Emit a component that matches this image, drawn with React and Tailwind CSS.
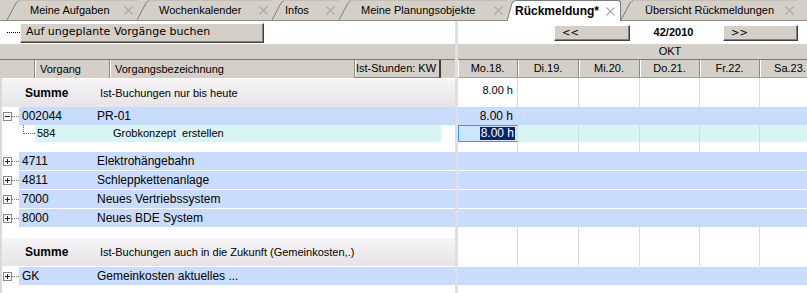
import React from 'react'

// tab strip of the planning client
const TABS = [
  { label: 'Meine Aufgaben', w: 'w-[130px]', pl: 'pl-[11px]' },
  { label: 'Wochenkalender', w: 'w-[135px]', pl: 'pl-[10px]' },
  { label: 'Infos', w: 'w-[67px]', pl: 'pl-[1px]' },
  { label: 'Meine Planungsobjekte', w: 'w-[168px]', pl: 'pl-[10px]' },
  { label: 'Rückmeldung*', w: 'w-[114px]', pl: 'pl-0', active: true },
  { label: 'Übersicht Rückmeldungen', w: 'w-[177px]', pl: 'pl-[12px]' },
]

const COL_W = ['w-[60px]', 'w-[61px]', 'w-[61px]', 'w-[60px]', 'w-[60px]', 'w-[61px]', 'w-[61px]']
const DAYS = ['Mo.18.', 'Di.19.', 'Mi.20.', 'Do.21.', 'Fr.22.', 'Sa.23.', 'So.24.']

const PROJECTS = [
  { code: '4711', name: 'Elektrohängebahn' },
  { code: '4811', name: 'Schleppkettenanlage' },
  { code: '7000', name: 'Neues Vertriebssystem' },
  { code: '8000', name: 'Neues BDE System' },
]

function CloseX() {
  return (
    <svg width="9" height="9" viewBox="0 0 9 9" className="shrink-0">
      <path d="M0.5 0.5 L8.5 8.5 M8.5 0.5 L0.5 8.5" stroke="#a9a9a9" strokeWidth="1.1" />
    </svg>
  )
}

function Tab({ tab }) {
  const slantW = tab.active ? 8 : 12
  return (
    <div className={`${tab.w} flex h-[20px] shrink-0 ${tab.active ? '-mb-px h-[21px]' : ''}`}>
      <svg width={slantW} height={tab.active ? 21 : 20} viewBox={`0 0 ${slantW} 20`} preserveAspectRatio="none" className="shrink-0">
        {tab.active && <path d={`M0 20 L${slantW - 3} 3 Q${slantW - 1.5} 1 ${slantW} 1 L${slantW} 20 Z`} fill="#fff" />}
        <path d={`M0 20 L${slantW - 3} 3 Q${slantW - 1.5} 1 ${slantW} 1`} stroke="#7c7c7c" fill="none" strokeWidth="1" />
      </svg>
      <div
        className={`flex flex-1 items-center border-t ${
          tab.active
            ? 'border-t-[#7c7c7c] border-r border-r-[#7c7c7c] rounded-tr-[3px] bg-white pr-[5px]'
            : 'border-t-[#c4c0b8] pr-[4px]'
        } ${tab.pl}`}
      >
        <span className={tab.active ? 'text-[12px] font-bold text-black' : 'text-[11px] text-black'}>{tab.label}</span>
        <span className="flex-1" />
        <CloseX />
      </div>
    </div>
  )
}

function TreeBox({ open }) {
  return (
    <div className="flex items-center">
      <svg width="9" height="9" viewBox="0 0 9 9" className="shrink-0">
        <rect x="0.5" y="0.5" width="8" height="8" fill="#fff" stroke="#8a8a8a" />
        <path d="M2 4.5 H7" stroke="#222" />
        {!open && <path d="M4.5 2 V7" stroke="#222" />}
      </svg>
      <div className="w-[7px] border-t border-dotted border-[#7a7a7a]" />
    </div>
  )
}

function ProjectRow({ code, name, open, last }) {
  return (
    <div className={`flex h-[18px] items-center pl-px ${last ? '' : 'mb-px'}`}>
      <TreeBox open={open} />
      <div className="flex h-full flex-1 items-center bg-[#cadcfd] pl-[3px] text-[12px] text-black">
        <span className="w-[75px]">{code}</span>
        <span>{name}</span>
      </div>
    </div>
  )
}

function SumRow({ label, h }) {
  return (
    <div className={`flex ${h} items-center border-t border-t-white bg-gradient-to-b from-[#f7f6f7] via-[#eeecee] to-[#e6e4e6] text-black`}>
      <span className="w-[98px] pl-[23px] text-[12px] font-bold">Summe</span>
      <span className="text-[11px]">{label}</span>
    </div>
  )
}

function Cells({ h, bg = '', lines = 'border-r-[#dcdcdc]', mb = '', first, firstCls = '' }) {
  return (
    <div className={`flex ${h} ${mb} ${bg}`}>
      {COL_W.map((w, i) => (
        <div key={i} className={`${w} shrink-0 border-r ${lines} ${i === 0 ? firstCls : ''}`}>
          {i === 0 ? first : null}
        </div>
      ))}
    </div>
  )
}

function Btn({ className, children }) {
  return (
    <div
      className={`flex items-center border border-t-white border-l-white border-r-[#404040] border-b-[#404040] bg-[#d4d0c8] shadow-[inset_-1px_-1px_0_#808080] ${className}`}
    >
      {children}
    </div>
  )
}

export default function App() {
  return (
    <div className="h-[293px] w-[807px] overflow-hidden bg-white font-['Liberation_Sans',Arial,sans-serif] text-black">
      {/* tab bar */}
      <div className="flex h-[21px] items-end border-b border-b-[#8c8c8c] bg-[#d4d0c8] pl-[7px]">
        {TABS.map(t => (
          <Tab key={t.label} tab={t} />
        ))}
      </div>

      <div className="flex h-[272px]">
        {/* left pane */}
        <div className="w-[455px] shrink-0">
          <div className="flex h-[23px] items-center">
            <div className="ml-[7px] w-[13px] border-t border-dotted border-black" />
            <Btn className="h-[20px] w-[244px] pl-[5px] font-['DejaVu_Sans',Verdana,sans-serif] text-[11px]">
              Auf ungeplante Vorgänge buchen
            </Btn>
          </div>
          <div className="h-[15px] bg-[#d4d0c8]" />
          <div className="flex h-[19px] border-t border-t-[#7a7a7a] bg-[#d4d0c8] text-[11px]">
            <div className="w-[35px] border-r border-r-[#8a8a8a]" />
            <div className="flex w-[75px] items-center border-r border-r-[#8a8a8a] pl-[5px] shadow-[inset_1px_0_0_#fff]">Vorgang</div>
            <div className="flex w-[245px] items-center border-r border-r-[#8a8a8a] pl-[5px] shadow-[inset_1px_0_0_#fff]">Vorgangsbezeichnung</div>
            <div className="flex w-[86px] items-center border-r-2 border-r-[#404040] border-b border-b-[#808080] pl-px shadow-[inset_1px_0_0_#fff]">Ist-Stunden: KW</div>
            <div className="flex-1" />
          </div>
          <div className="h-[234px] border-l-2 border-l-[#dadada]">
            <SumRow h="h-[29px]" label="Ist-Buchungen nur bis heute" />
            <ProjectRow code="002044" name="PR-01" open last />
            <div className="flex h-[17px]">
              <div className="ml-[21px] h-[9px] w-[12px] border-l border-b border-dotted border-[#6a6a6a]" />
              <div className="flex w-[406px] items-center bg-[#daf3f5] pl-[2px] text-[11px]">
                <span className="w-[76px]">584</span>
                <span>Grobkonzept&nbsp; erstellen</span>
              </div>
            </div>
            <div className="h-[10px]" />
            {PROJECTS.map((p, i) => (
              <ProjectRow key={p.code} {...p} last={i === PROJECTS.length - 1} />
            ))}
            <div className="h-[10px]" />
            <SumRow h="h-[29px]" label="Ist-Buchungen auch in die Zukunft (Gemeinkosten,.)" />
            <div className="mt-px">
              <ProjectRow code="GK" name="Gemeinkosten aktuelles ..." last />
            </div>
          </div>
        </div>

        {/* splitter */}
        <div className="w-[3px] shrink-0 bg-[#e2dee6]" />

        {/* calendar pane */}
        <div className="flex-1 overflow-hidden">
          <div className="w-[424px]">
            <div className="flex h-[23px] items-center">
              <Btn className="ml-[96px] h-[16px] w-[76px] pl-[7px] font-['DejaVu_Sans',Verdana,sans-serif] text-[10px]">&lt;&lt;</Btn>
              <div className="w-[93px] pr-[6px] text-center text-[11px] font-bold">42/2010</div>
              <Btn className="h-[16px] w-[75px] pl-[7px] font-['DejaVu_Sans',Verdana,sans-serif] text-[10px]">&gt;&gt;</Btn>
            </div>
            <div className="flex h-[15px] items-center justify-center bg-[#d4d0c8] text-[11px]">OKT</div>
            <div className="flex h-[19px] border-t border-t-[#7a7a7a] bg-[#d4d0c8] text-[11px]">
              {DAYS.map((d, i) => (
                <div
                  key={d}
                  className={`${COL_W[i]} flex shrink-0 items-center justify-center border-r border-r-[#8a8a8a] border-b border-b-[#a0a0a0] shadow-[inset_1px_0_0_#fff]`}
                >
                  {d}
                </div>
              ))}
            </div>
            <Cells
              h="h-[29px]"
              first={<div className="flex h-[25px] items-center justify-end pr-[4px] text-[11px]">8.00 h</div>}
            />
            <Cells
              h="h-[18px]"
              bg="bg-[#cadcfd]"
              lines="border-r-transparent"
              first={<div className="flex h-full items-center justify-end pr-[4px] text-[12px]">8.00 h</div>}
            />
            <Cells
              h="h-[17px]"
              bg="bg-[#daf3f5]"
              lines="border-r-[#c6e2e4]"
              firstCls="border border-[#3c9ade] bg-[#cfe5fd]"
              first={
                <div className="flex h-full items-center justify-end pr-[2px] text-[12px]">
                  <span className="bg-[#0a246a] px-px leading-[13px] text-white">8.00 h</span>
                </div>
              }
            />
            <Cells h="h-[10px]" />
            {PROJECTS.map((p, i) => (
              <Cells
                key={p.code}
                h="h-[18px]"
                bg="bg-[#cadcfd]"
                lines="border-r-transparent"
                mb={i === PROJECTS.length - 1 ? '' : 'mb-px'}
              />
            ))}
            <Cells h="h-[10px]" />
            <Cells h="h-[29px]" />
            <div className="mt-px">
              <Cells h="h-[18px]" bg="bg-[#cadcfd]" lines="border-r-transparent" />
            </div>
          </div>
        </div>
      </div>
    </div>
  )
}
